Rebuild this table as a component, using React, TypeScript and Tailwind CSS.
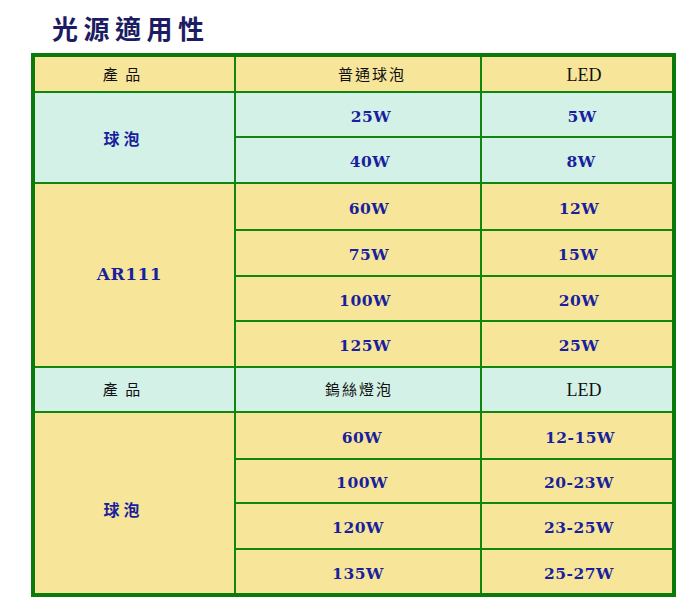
import React from "react";

const Y = "bg-[#f7e699]";
const C = "bg-[#d4f1e8]";

function Val({ children, bg, pad }: { children: React.ReactNode; bg: string; pad: string }) {
  return (
    <div
      className={`${bg} ${pad} flex items-center justify-center font-['DejaVu_Serif','Liberation_Serif',serif] text-[15.5px] font-bold tracking-[0.5px] text-[#1a1f9e]`}
    >
      <span className="pt-[4px]">{children}</span>
    </div>
  );
}

function HeadCJK({ children, bg, pad }: { children: React.ReactNode; bg: string; pad: string }) {
  return (
    <div
      className={`${bg} ${pad} flex items-center justify-center font-['Noto_Sans_CJK_TC','Noto_Sans_CJK_SC',sans-serif] text-[15px] tracking-[2px] text-[#111]`}
    >
      {children}
    </div>
  );
}

function HeadLED({ bg }: { bg: string }) {
  return (
    <div
      className={`${bg} flex items-center justify-center pl-[14px] pt-[2px] font-['Liberation_Serif',serif] text-[18px] text-[#111]`}
    >
      LED
    </div>
  );
}

function Prod({ children, bg, span }: { children: React.ReactNode; bg: string; span: string }) {
  return (
    <div
      className={`${bg} ${span} flex items-center justify-center pr-[22px] font-['Noto_Sans_CJK_TC','Noto_Sans_CJK_SC',sans-serif] text-[16px] font-bold tracking-[4px] text-[#1a1f9e]`}
    >
      {children}
    </div>
  );
}

export default function App() {
  return (
    <div className="relative h-[610px] w-[700px] bg-white">
      <div className="pl-[52px] pt-[13px] font-['Noto_Sans_CJK_TC','Noto_Sans_CJK_SC',sans-serif] text-[26px] leading-[30px] font-bold tracking-[5.5px] text-[#1c1c62]">
        光源適用性
      </div>
      <div className="ml-[31px] mt-[10px] w-[645px]">
        <div className="grid grid-cols-[199px_244px_190px] grid-rows-[34px_43px_44px_45px_44px_43px_44px_43px_45px_42px_44px_43px] gap-[2px] border-[4px] border-[#0b7a0b] bg-[#108510]">
          <HeadCJK bg={Y} pad="pr-[24px]">產 品</HeadCJK>
          <HeadCJK bg={Y} pad="pl-[28px]">普通球泡</HeadCJK>
          <HeadLED bg={Y} />

          <Prod bg={C} span="row-span-2">球泡</Prod>
          <Val bg={C} pad="pl-[26px]">25W</Val>
          <Val bg={C} pad="pl-[10px]">5W</Val>
          <Val bg={C} pad="pl-[24px]">40W</Val>
          <Val bg={C} pad="pl-[8px]">8W</Val>

          <div
            className={`${Y} row-span-4 flex items-center justify-center pr-[10px] font-['DejaVu_Serif','Liberation_Serif',serif] text-[17px] font-bold tracking-[0.5px] text-[#1a1f9e]`}
          >
            AR111
          </div>
          <Val bg={Y} pad="pl-[22px]">60W</Val>
          <Val bg={Y} pad="pl-[4px]">12W</Val>
          <Val bg={Y} pad="pl-[22px]">75W</Val>
          <Val bg={Y} pad="pl-[2px]">15W</Val>
          <Val bg={Y} pad="pl-[14px]">100W</Val>
          <Val bg={Y} pad="pl-[4px]">20W</Val>
          <Val bg={Y} pad="pl-[14px]">125W</Val>
          <Val bg={Y} pad="pl-[4px]">25W</Val>

          <HeadCJK bg={C} pad="pr-[24px]">產 品</HeadCJK>
          <HeadCJK bg={C} pad="pl-[2px]">鎢絲燈泡</HeadCJK>
          <HeadLED bg={C} />

          <Prod bg={Y} span="row-span-4">
            <span className="pt-[12px]">球泡</span>
          </Prod>
          <Val bg={Y} pad="pl-[8px]">60W</Val>
          <Val bg={Y} pad="pl-[6px]">12-15W</Val>
          <Val bg={Y} pad="pl-[8px]">100W</Val>
          <Val bg={Y} pad="pl-[4px]">20-23W</Val>
          <Val bg={Y} pad="pl-[0px]">120W</Val>
          <Val bg={Y} pad="pl-[4px]">23-25W</Val>
          <Val bg={Y} pad="pl-[0px]">135W</Val>
          <Val bg={Y} pad="pl-[4px]">25-27W</Val>
        </div>
      </div>
    </div>
  );
}
